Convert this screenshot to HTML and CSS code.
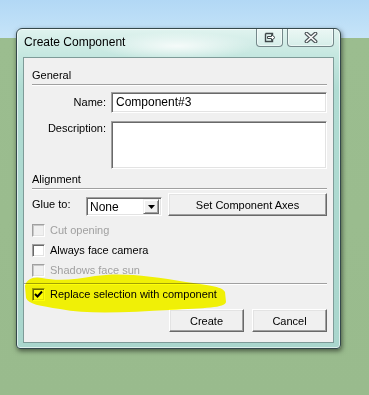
FILE: index.html
```html
<!DOCTYPE html>
<html lang="en">
  <head>
    <meta charset="UTF-8">
    <title>Create Component</title>
    <link rel="stylesheet" href="styles.css">
  </head>
  <body>
    <div class="dialog">
      <div class="titlebar">
        <span class="title">Create Component</span>
        <div class="caption-buttons">
          <span class="cap-btn dock-btn">
            <svg width="12" height="11" viewBox="0 0 12 11">
              <path d="M1.5 1.5h7v2 M1.5 1.5v8h7v-2" stroke="#3f484a" stroke-width="1.4" fill="none"/>
              <path d="M3.5 4.5h4v-2l3.5 3-3.5 3v-2h-4z" fill="#fff" stroke="#3f484a" stroke-linejoin="round"/>
            </svg>
          </span>
          <span class="cap-btn close-btn">
            <svg width="14" height="11" viewBox="0 0 14 11">
              <path d="M2.5 1.5l9 8M11.5 1.5l-9 8" stroke="#4f585b" stroke-width="3.8" stroke-linecap="round"/>
              <path d="M2.5 1.5l9 8M11.5 1.5l-9 8" stroke="#fff" stroke-width="1.6" stroke-linecap="round"/>
            </svg>
          </span>
        </div>
      </div>

      <div class="client">
        <div class="section-head">General</div>

        <div class="field-row name-row">
          <span class="field-label">Name:</span>
          <div class="textbox">Component#3</div>
        </div>
        <div class="field-row desc-row">
          <span class="field-label">Description:</span>
          <div class="textbox textarea"></div>
        </div>

        <div class="section-head align-head">Alignment</div>

        <div class="glue-row">
          <span class="glue-label">Glue to:</span>
          <div class="combo">
            <span class="combo-text">None</span>
            <span class="combo-btn">
              <svg width="7" height="4" viewBox="0 0 7 4"><path d="M0 0h7l-3.5 4z" fill="#000"/></svg>
            </span>
          </div>
          <span class="btn axes-btn">Set Component Axes</span>
        </div>

        <div class="check-list">
          <div class="check-row disabled"><span class="checkbox"></span>Cut opening</div>
          <div class="check-row"><span class="checkbox"></span>Always face camera</div>
          <div class="check-row disabled"><span class="checkbox"></span>Shadows face sun</div>
        </div>

        <div class="separator"></div>

        <div class="check-row"><span class="checkbox checked">
          <svg width="9" height="9" viewBox="0 0 9 9"><path d="M1 4l2.5 2.5L8 1.5" stroke="#000" stroke-width="2" fill="none"/></svg>
        </span>Replace selection with component</div>

        <div class="button-row">
          <span class="btn dlg-btn">Create</span>
          <span class="btn dlg-btn">Cancel</span>
        </div>
      </div>
    </div>

    <!-- highlighter mark drawn over the screenshot -->
    <svg class="highlight" width="369" height="395" viewBox="0 0 369 395">
      <path d="M25 286 C26 279 34 276 42 278 C56 281 75 280 95 276 C120 272 152 276 186 282 C206 285 222 286 225 292 L226 302 C225 308 205 308 170 310 C130 312 90 315 60 309 C40 306 28 304 26 298 Z" fill="#ffff06"/>
    </svg>
  </body>
</html>
```

FILE: styles.css
```css
/* page backdrop: sky strip on top, green scene below */
body {
  margin: 0;
  padding: 28px 0 0 16px;
  height: 395px;
  box-sizing: border-box;
  overflow: hidden;
  position: relative;
  font-family: 'Liberation Sans', Arial, sans-serif;
  font-size: 11px;
  color: #000;
  background: linear-gradient(180deg, #b2d8f5 0, #c6e4f8 38px, #9bbd8f 38px, #99bb8d 100%);
}

/* window frame */
.dialog {
  position: relative;
  width: 325px;
  height: 321px;
  box-sizing: border-box;
  padding: 0 6px 5px;
  border: 1px solid #34484b;
  border-radius: 6px 6px 4px 4px;
  background:
    radial-gradient(ellipse 80px 14px at 160px 17px, rgba(255, 255, 255, 0.8), rgba(255, 255, 255, 0)),
    linear-gradient(180deg, #e0f3ef 0, #c5e7e0 26px, #b0dcd3 60px, #a9d6cd 100%);
  box-shadow: 1px 2px 5px rgba(0, 0, 0, 0.55), inset 0 0 0 1px rgba(255, 255, 255, 0.6);
}

.titlebar {
  height: 28px;
  display: flex;
  align-items: flex-start;
}

.title {
  padding: 6px 0 0 1px;
  font-size: 12px;
  line-height: 15px;
}

.caption-buttons {
  margin-left: auto;
  display: flex;
  gap: 4px;
}

.cap-btn {
  height: 18px;
  box-sizing: border-box;
  display: flex;
  align-items: center;
  justify-content: center;
  border: 1px solid #74888a;
  border-top: none;
  border-radius: 0 0 4px 4px;
  background: linear-gradient(180deg, rgba(255, 255, 255, 0.35), rgba(255, 255, 255, 0.15));
  box-shadow: inset 0 0 0 1px rgba(255, 255, 255, 0.5);
}

.dock-btn {
  width: 27px;
}

.close-btn {
  width: 47px;
}

/* client area */
.client {
  height: 286px;
  box-sizing: border-box;
  border: 1px solid #7e9b98;
  background: #f0f0f0;
  padding: 0 6px 0 8px;
}

.section-head {
  padding: 10px 0 1px;
  line-height: 15px;
  border-bottom: 1px solid #a0a0a0;
  box-shadow: 0 1px #fff;
}

.align-head {
  padding-top: 3px;
}

.field-row {
  display: flex;
  gap: 5px;
}

.field-label {
  width: 74px;
  text-align: right;
  line-height: 15px;
}

.name-row {
  margin-top: 7px;
  align-items: center;
}

.desc-row {
  margin-top: 8px;
}

/* sunken 3d field */
.textbox {
  flex: 1;
  height: 21px;
  box-sizing: border-box;
  padding: 0 3px 0 4px;
  background: #fff;
  border: 1px solid;
  border-color: #a0a0a0 #fff #fff #a0a0a0;
  box-shadow: inset 1px 1px #696969, inset -1px -1px #e3e3e3;
  font-size: 12px;
  line-height: 19px;
}

.textarea {
  height: 48px;
}

.glue-row {
  margin-top: 4px;
  display: flex;
  align-items: flex-end;
}

.glue-label {
  width: 54px;
  align-self: center;
  line-height: 15px;
}

.combo {
  width: 76px;
  height: 19px;
  box-sizing: border-box;
  display: flex;
  align-items: center;
  background: #fff;
  border: 1px solid;
  border-color: #a0a0a0 #fff #fff #a0a0a0;
  box-shadow: inset 1px 1px #696969, inset -1px -1px #e3e3e3;
  padding: 2px;
  margin-right: 6px;
}

.combo-text {
  flex: 1;
  padding-left: 1px;
  font-size: 12px;
}

.combo-btn {
  width: 16px;
  height: 15px;
  box-sizing: border-box;
  display: flex;
  align-items: center;
  justify-content: center;
  background: #f0f0f0;
  border: 1px solid;
  border-color: #f0f0f0 #696969 #696969 #f0f0f0;
  box-shadow: inset 1px 1px #fff, inset -1px -1px #a0a0a0;
}

/* raised 3d button */
.btn {
  height: 23px;
  box-sizing: border-box;
  display: flex;
  align-items: center;
  justify-content: center;
  background: #f0f0f0;
  border: 1px solid;
  border-color: #fff #696969 #696969 #fff;
  box-shadow: inset -1px -1px #a0a0a0, inset 1px 1px #e3e3e3;
  font-size: 11px;
}

.axes-btn {
  flex: 1;
}

.check-list {
  margin-top: 4px;
}

.check-row {
  height: 20px;
  display: flex;
  align-items: center;
  gap: 5px;
  font-size: 11px;
}

.check-row.disabled {
  color: #a0a0a0;
}

.checkbox {
  width: 13px;
  height: 13px;
  box-sizing: border-box;
  display: flex;
  align-items: center;
  justify-content: center;
  background: #fff;
  border: 1px solid;
  border-color: #a0a0a0 #fff #fff #a0a0a0;
  box-shadow: inset 1px 1px #696969, inset -1px -1px #e3e3e3;
}

.disabled .checkbox {
  background: #f0f0f0;
  box-shadow: inset 1px 1px #c8c8c8, inset -1px -1px #e3e3e3;
}

.separator {
  margin: 3px 0 0 -8px;
  border-top: 1px solid #a0a0a0;
  box-shadow: 0 1px #fff;
}

.button-row {
  margin-top: 5px;
  display: flex;
  justify-content: flex-end;
  gap: 8px;
}

.dlg-btn {
  width: 75px;
}

/* yellow marker stroke over the dialog */
.highlight {
  position: absolute;
  left: 0;
  top: 0;
  pointer-events: none;
  mix-blend-mode: multiply;
}
```
